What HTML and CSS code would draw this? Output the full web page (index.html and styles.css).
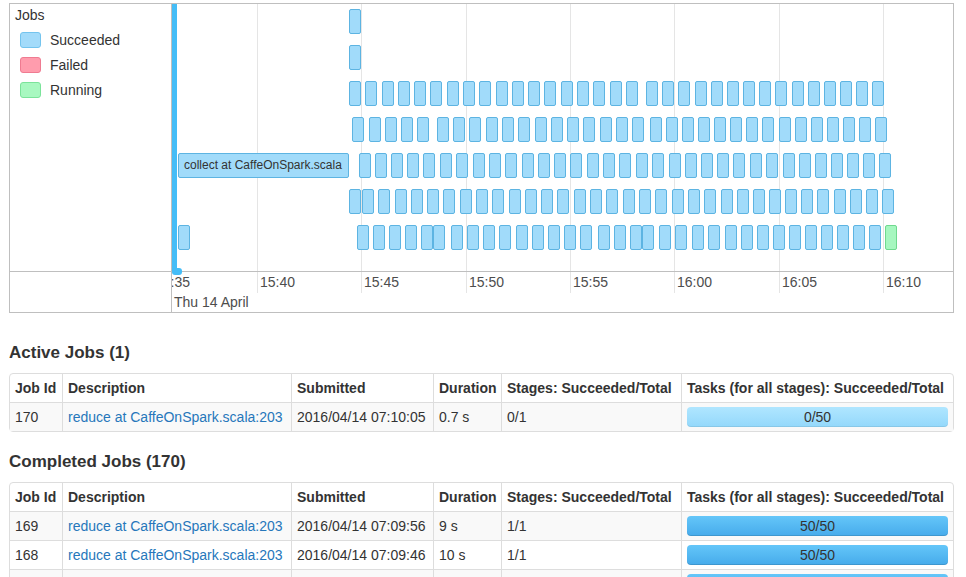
FILE: index.html
```html
<!DOCTYPE html>
<html>
<head>
<meta charset="utf-8">
<title>Spark Jobs</title>
<link rel="stylesheet" href="styles.css">
</head>
<body>

<div class="timeline">
    <div class="tl-left">
        <div class="legend-title">Jobs</div>
        <div class="legend-item"><span class="swatch succeeded"></span>Succeeded</div>
        <div class="legend-item"><span class="swatch failed"></span>Failed</div>
        <div class="legend-item"><span class="swatch running"></span>Running</div>
    </div>
    <div class="tl-center" id="items">
        <div class="collect-label">collect at CaffeOnSpark.scala</div>
    </div>
    <div class="tl-left-axis"></div>
    <div class="tl-axis" id="axis">
        <div class="major-label">Thu 14 April</div>
    </div>
    <div class="now-bar"></div>
    <div class="now-knob"></div>
</div>

<h4>Active Jobs (1)</h4>
<table class="jobs">
    <colgroup>
        <col class="c-id"><col class="c-desc"><col class="c-sub"><col class="c-dur"><col class="c-stage"><col>
    </colgroup>
    <thead>
        <tr><th>Job Id</th><th>Description</th><th>Submitted</th><th>Duration</th><th>Stages: Succeeded/Total</th><th>Tasks (for all stages): Succeeded/Total</th></tr>
    </thead>
    <tbody>
        <tr>
            <td>170</td>
            <td><a href="#">reduce at CaffeOnSpark.scala:203</a></td>
            <td>2016/04/14 07:10:05</td>
            <td>0.7 s</td>
            <td>0/1</td>
            <td><div class="progress running-bar">0/50</div></td>
        </tr>
    </tbody>
</table>

<h4>Completed Jobs (170)</h4>
<table class="jobs">
    <colgroup>
        <col class="c-id"><col class="c-desc"><col class="c-sub"><col class="c-dur"><col class="c-stage"><col>
    </colgroup>
    <thead>
        <tr><th>Job Id</th><th>Description</th><th>Submitted</th><th>Duration</th><th>Stages: Succeeded/Total</th><th>Tasks (for all stages): Succeeded/Total</th></tr>
    </thead>
    <tbody>
        <tr>
            <td>169</td>
            <td><a href="#">reduce at CaffeOnSpark.scala:203</a></td>
            <td>2016/04/14 07:09:56</td>
            <td>9 s</td>
            <td>1/1</td>
            <td><div class="progress done-bar">50/50</div></td>
        </tr>
        <tr>
            <td>168</td>
            <td><a href="#">reduce at CaffeOnSpark.scala:203</a></td>
            <td>2016/04/14 07:09:46</td>
            <td>10 s</td>
            <td>1/1</td>
            <td><div class="progress done-bar">50/50</div></td>
        </tr>
        <tr>
            <td>167</td>
            <td><a href="#">reduce at CaffeOnSpark.scala:203</a></td>
            <td>2016/04/14 07:09:36</td>
            <td>10 s</td>
            <td>1/1</td>
            <td><div class="progress done-bar">50/50</div></td>
        </tr>
    </tbody>
</table>

<script type="text/javascript">

    // x de cada job (px da tela), uma lista por linha do timeline
    var rows = [
        [349],
        [349],
        [349,365,382,398,414,430,447,463,479,496,512,528,544,561,577,593,610,626,646,662,678,695,711,727,743,759,775,792,808,824,840,856,872],
        [352,369,385,401,417,437,453,469,486,502,518,535,551,567,583,600,616,632,650,666,682,698,714,730,746,762,779,795,811,827,843,859,875],
        [359,375,391,407,423,440,456,473,489,505,522,538,554,570,587,603,619,636,652,669,685,701,717,733,750,766,783,799,815,831,847,863,879],
        [349,362,378,395,411,427,443,460,476,492,509,525,541,557,574,590,606,623,639,655,672,688,704,721,737,753,769,785,801,817,834,850,866,882],
        [178,357,373,389,405,421,433,451,467,483,499,516,532,548,564,580,598,614,630,642,659,675,692,708,725,741,757,773,789,805,821,837,853,869,885]
    ];
    var origem = 172;
    var labels = ["15:35","15:40","15:45","15:50","15:55","16:00","16:05","16:10"];

    var items = document.getElementById("items");
    var axis = document.getElementById("axis");

    // linhas de grade e rotulos do eixo
    for (let k = 0; k < labels.length; k++){
        let x = Math.round(84.7 + 104.4 * (k - 1));

        let g = document.createElement("div");
        g.className = "grid-line";
        g.style.left = x + "px";
        items.insertBefore(g, items.firstChild);

        let g2 = document.createElement("div");
        g2.className = "grid-line short";
        g2.style.left = x + "px";
        axis.appendChild(g2);

        let t = document.createElement("div");
        t.className = "minor-label";
        t.style.left = (x + 3) + "px";
        t.textContent = labels[k];
        axis.appendChild(t);
    }

    for (let r = 0; r < rows.length; r++){
        for (let i = 0; i < rows[r].length; i++){
            let box = document.createElement("div");
            box.className = "job-box";
            if (r == rows.length - 1 && i == rows[r].length - 1)
                box.className += " running";
            box.style.left = (rows[r][i] - origem) + "px";
            box.style.top = (5 + 36 * r) + "px";
            items.appendChild(box);
        }
    }

</script>

</body>
</html>
```

FILE: styles.css
```css
body{
    margin: 3px 12px 0 9px;
    font-family: "Liberation Sans", Arial, sans-serif;
    font-size: 14px;
    color: #333;
}

a{
    color: #2677bb;
    text-decoration: none;
}

h4{
    font-size: 17px;
    line-height: 20px;
    font-weight: bold;
    margin: 0 0 10px 0;
    color: #333;
}

/* timeline */

.timeline{
    position: relative;
    display: grid;
    grid-template-columns: 162px 1fr;
    grid-template-rows: 268px 40px;
    border: 1px solid #bfbfbf;
    margin-bottom: 30px;
}

.tl-left{
    border-right: 1px solid #bfbfbf;
    border-bottom: 1px solid #bfbfbf;
}

.tl-left-axis{
    border-right: 1px solid #bfbfbf;
}

.tl-center{
    position: relative;
    overflow: hidden;
    border-bottom: 1px solid #bfbfbf;
}

.tl-axis{
    position: relative;
    overflow: hidden;
    color: #4d4d4d;
}

.legend-title{
    padding: 3px 0 0 5px;
    height: 20px;
    line-height: 17px;
}

.legend-item{
    display: flex;
    align-items: center;
    height: 25px;
    padding-left: 10px;
}

.swatch{
    display: inline-block;
    box-sizing: border-box;
    width: 21px;
    height: 16px;
    border: 1px solid;
    border-radius: 3px;
    margin-right: 9px;
}

.swatch.succeeded{
    background-color: #a3dbfa;
    border-color: #74c4ee;
}

.swatch.failed{
    background-color: #ff9cad;
    border-color: #ef7b91;
}

.swatch.running{
    background-color: #a8f8c0;
    border-color: #7be39a;
}

.grid-line{
    position: absolute;
    top: 0;
    bottom: 0;
    width: 1px;
    background-color: #e5e5e5;
}

.grid-line.short{
    bottom: auto;
    height: 21px;
}

.job-box{
    position: absolute;
    box-sizing: border-box;
    width: 12px;
    height: 25px;
    background-color: #a1dbfa;
    border: 1px solid #5db4e2;
    border-radius: 2px;
}

.job-box.running{
    background-color: #a6f7bf;
    border-color: #6fd98e;
}

.collect-label{
    position: absolute;
    left: 6px;
    top: 149px;
    box-sizing: border-box;
    width: 171px;
    height: 25px;
    padding-left: 5px;
    line-height: 23px;
    font-size: 12px;
    background-color: #a1dbfa;
    border: 1px solid #5db4e2;
    border-radius: 2px;
    z-index: 1;
}

.minor-label{
    position: absolute;
    top: 2px;
    line-height: 16px;
    white-space: nowrap;
}

.major-label{
    position: absolute;
    left: 2px;
    top: 22px;
    line-height: 16px;
    white-space: nowrap;
}

.now-bar{
    position: absolute;
    left: 162px;
    top: 0;
    width: 5px;
    height: 267px;
    background-color: #45bdf7;
    z-index: 2;
}

.now-knob{
    position: absolute;
    left: 162px;
    top: 264px;
    width: 10px;
    height: 7px;
    border-radius: 3px;
    background-color: #45bdf7;
    z-index: 2;
}

/* tabelas */

.jobs{
    width: 100%;
    table-layout: fixed;
    border-collapse: separate;
    border-spacing: 0;
    border: 1px solid #ddd;
    border-radius: 4px;
    margin-bottom: 20px;
}

.c-id{ width: 52px; }
.c-desc{ width: 229px; }
.c-sub{ width: 142px; }
.c-dur{ width: 68px; }
.c-stage{ width: 180px; }

.jobs th, .jobs td{
    padding: 4px 5px;
    line-height: 20px;
    text-align: left;
    white-space: nowrap;
    overflow: hidden;
    border-left: 1px solid #ddd;
    border-top: 1px solid #ddd;
}

.jobs th:first-child, .jobs td:first-child{
    border-left: none;
}

.jobs thead th{
    border-top: none;
    font-weight: bold;
}

.jobs tbody tr:nth-child(odd) td{
    background-color: #f9f9f9;
}

.progress{
    height: 20px;
    line-height: 20px;
    border-radius: 4px;
    text-align: center;
    color: #333;
}

.running-bar{
    background-image: linear-gradient(to bottom, #b0e6ff 0%, #93d8fb 100%);
    box-shadow: inset 0 -1px 0 rgba(0,0,0,0.08);
}

.done-bar{
    background-image: linear-gradient(to bottom, #64c6f9 0%, #46abeb 100%);
    box-shadow: inset 0 -1px 0 rgba(0,0,0,0.12);
}
```
